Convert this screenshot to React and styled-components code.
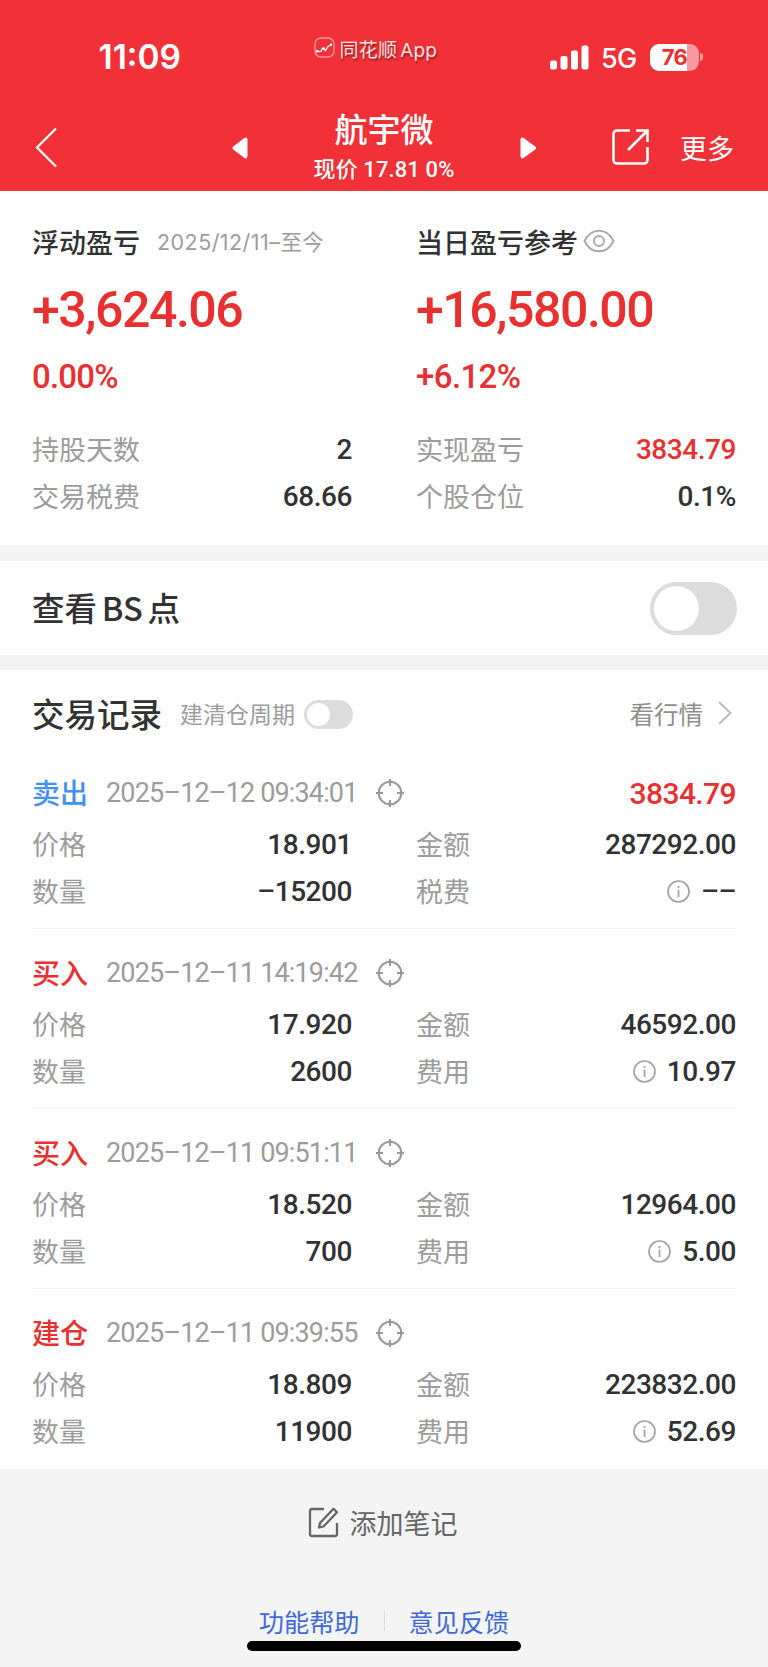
import React from "react";
import styled, { createGlobalStyle } from "styled-components";

const RED = "#e93030";
const INK = "#323232";
const GREY = "#9c9c9c";

const GlobalStyle = createGlobalStyle`
  body {
    margin: 0;
    background: #f4f4f4;
    font-family: "Noto Sans CJK SC", sans-serif;
    color: ${INK};
  }
`;

const Screen = styled.main`
  width: 768px;
  height: 1667px;
  display: flex;
  flex-direction: column;
  overflow: hidden;
  white-space: nowrap;
  svg { display: block; flex: none; }
`;

const Header = styled.header`
  height: 191px;
  background: #f23037;
  color: #fff;
  flex: none;
`;

const StatusBar = styled.div`
  height: 104px;
  display: grid;
  grid-template-columns: 1fr 124px 1fr;
  align-items: start;
  box-sizing: border-box;
  font-family: Inter, "Noto Sans CJK SC", sans-serif;
`;

const Clock = styled.div`
  padding: 37px 0 0 98.5px;
  font-size: 33.5px;
  font-weight: 600;
  line-height: 40px;
`;

const AppTag = styled.div`
  display: flex;
  align-items: center;
  gap: 3.5px;
  margin: 35px -2px 0 -8px;
  height: 26px;
  font-size: 19px;
  word-spacing: -2.5px;
  letter-spacing: 0.2px;
  color: #ffe3e3;
  text-shadow: 1px 2px 2px rgba(90, 0, 0, 0.55);
`;

const Signals = styled.div`
  display: flex;
  align-items: center;
  justify-content: flex-end;
  height: 40px;
  padding: 37px 65px 0 0;
`;

const Network = styled.span`
  font-size: 27px;
  font-weight: 500;
  width: 35px;
  margin: 2px 14px 0 12px;
  letter-spacing: -0.6px;
`;

const Battery = styled.div`
  width: 49px;
  height: 27px;
  border-radius: 9px;
  background: linear-gradient(to right, #fff 37px, #fb999d 37px);
  color: ${RED};
  font-size: 22px;
  font-weight: 700;
  line-height: 27px;
  text-align: center;
  letter-spacing: -0.5px;
`;

const BatteryTip = styled.div`
  width: 3px;
  height: 8px;
  margin-left: 1px;
  border-radius: 0 3px 3px 0;
  background: #fb999d;
`;

const NavBar = styled.nav`
  height: 87px;
  display: grid;
  grid-template-columns: 1fr 304px 1fr;
  align-items: start;
`;

const NavBack = styled.div`
  padding: 22px 0 0 34px;
`;

const StockSwitch = styled.div`
  display: flex;
  justify-content: space-between;
  align-items: flex-start;
  & > svg { margin-top: 32px; }
`;

const StockTitle = styled.div`
  text-align: center;
`;

const StockName = styled.div`
  font-size: 33px;
  font-weight: 500;
  line-height: 40px;
  margin-top: 4px;
`;

const StockPrice = styled.div`
  font-family: Roboto, "Noto Sans CJK SC", sans-serif;
  font-size: 22px;
  font-weight: 500;
  line-height: 30px;
  margin-top: 7px;
  letter-spacing: 0.1px;
`;

const NavActions = styled.div`
  display: flex;
  justify-content: flex-end;
  gap: 31px;
  padding: 25px 34px 0 0;
`;

const NavText = styled.span`
  font-size: 27px;
  line-height: 38px;
`;

const Panel = styled.section`
  background: #fff;
  box-sizing: border-box;
  flex: none;
  height: ${(p) => p.$height}px;
  padding: 0 32px;
  margin-bottom: ${(p) => p.$after || 0}px;
`;

const Columns = styled.div`
  display: grid;
  grid-template-columns: 320px 320px;
  column-gap: 64px;
`;

const SummaryHead = styled.div`
  display: flex;
  align-items: center;
  height: 40px;
  margin-top: 30px;
  font-size: 27px;
  font-weight: 500;
  & > svg { margin-left: 5px; }
`;

const Period = styled.span`
  margin: -2px 0 0 17px;
  font-family: Inter, "Noto Sans CJK SC", sans-serif;
  font-size: 21.5px;
  font-weight: 400;
  color: ${GREY};
  letter-spacing: 0.45px;
`;

const Num = styled.span`
  font-family: Roboto, "Noto Sans CJK SC", sans-serif;
  font-size: ${(p) => p.$size || 28}px;
  font-weight: 500;
  color: ${(p) => p.$color || INK};
  letter-spacing: ${(p) => p.$track ?? -0.45}px;
`;

const BigFigure = styled.div`
  height: 64px;
  margin-top: 17px;
  line-height: 64px;
`;

const Ratio = styled.div`
  height: 40px;
  margin: 15px 0 30px;
  line-height: 40px;
`;

const Field = styled.div`
  display: flex;
  align-items: center;
  justify-content: space-between;
  height: 46.5px;
  line-height: 46px;
`;

const FieldLabel = styled.span`
  margin-top: -2px;
  font-size: 27px;
  color: ${GREY};
`;

const FieldValue = styled.span`
  display: flex;
  align-items: center;
  gap: 11px;
`;

const SwitchRow = styled.div`
  display: flex;
  align-items: center;
  justify-content: space-between;
  height: 100%;
`;

const SectionTitle = styled.h2`
  margin: -2px 0 0;
  font-size: 32.5px;
  font-weight: 500;
  line-height: 44px;
  word-spacing: -2.5px;
`;

const Toggle = styled.div`
  box-sizing: border-box;
  width: ${(p) => (p.$small ? 49 : 87)}px;
  height: ${(p) => (p.$small ? 29 : 53)}px;
  padding: ${(p) => (p.$small ? 3 : 4)}px;
  margin-right: -1px;
  border-radius: 27px;
  background: #dcdcdc;
`;

const Knob = styled.div`
  height: 100%;
  aspect-ratio: 1;
  border-radius: 50%;
  background: #fff;
`;

const RecordsHead = styled.div`
  display: flex;
  align-items: center;
  height: 70px;
  padding-top: 9px;
`;

const CycleLabel = styled.span`
  margin: -2px 9px 0 18px;
  font-size: 23px;
  color: ${GREY};
`;

const QuoteLink = styled.a`
  display: flex;
  align-items: center;
  gap: 14.5px;
  margin: -2px 0 0 auto;
  padding-right: 4.5px;
  font-size: 24.5px;
  color: #8e8e8e;
`;

const Record = styled.article`
  box-sizing: border-box;
  height: 180px;
  padding-top: 20px;
  border-bottom: 1px solid ${(p) => (p.$last ? "transparent" : "#f3f3f3")};
`;

const RecordHead = styled.div`
  display: flex;
  align-items: center;
  height: 48px;
  margin-bottom: 5px;
`;

const Side = styled.span`
  width: 74px;
  margin-top: -2px;
  font-size: 28px;
  font-weight: 500;
  line-height: 48px;
  color: ${(p) => p.$color};
`;

const Stamp = styled.span`
  width: 270px;
  font-family: Roboto, sans-serif;
  font-size: 27px;
  font-weight: 400;
  color: ${GREY};
  letter-spacing: -0.85px;
`;

const Profit = styled.span`
  margin-left: auto;
`;

const Footer = styled.footer`
  display: flex;
  flex-direction: column;
  align-items: center;
  height: 198px;
  background: #f4f4f4;
`;

const AddNote = styled.div`
  display: flex;
  align-items: center;
  gap: 11px;
  height: 40px;
  margin: 33px 0 59px -3px;
  font-size: 27px;
  color: #666;
`;

const Links = styled.div`
  display: flex;
  align-items: center;
  height: 40px;
  font-size: 25.2px;
  color: #4169d8;
`;

const LinkRule = styled.i`
  width: 1px;
  height: 20px;
  margin: 0 23.5px 0 24.5px;
  background: #dcdcdc;
`;

const HomeBar = styled.div`
  width: 274px;
  height: 10px;
  border-radius: 5px;
  background: #000;
`;

const Logo = () => (
  <svg width="22" height="22" viewBox="0 0 22 22" fill="none" stroke="#ff9d9d">
    <rect x="1" y="1" width="19" height="19" rx="6" strokeWidth="1.3" />
    <path d="M3 14.5h4L8.5 11l3 2.5L14 9.5l3-1.8" stroke="#fff" strokeWidth="1.2" />
    <path d="M2 14.3h2.5M9.500 11.500h1.500M16 7.700h2" stroke="#fff" strokeWidth="2.5" />
  </svg>
);

const Bars = () => (
  <svg width="39" height="25" viewBox="0 0 39 25" fill="#fff">
    <rect x="0" y="15.5" width="7" height="9" rx="2" />
    <rect x="10.5" y="11" width="7" height="13.5" rx="2" />
    <rect x="21" y="5.5" width="7" height="19" rx="2" />
    <rect x="31.5" y="0.5" width="7" height="24" rx="2" />
  </svg>
);

const BackIcon = () => (
  <svg width="24" height="42" viewBox="0 0 24 42" fill="none" stroke="#fff" strokeWidth="2.3">
    <path d="M22 2.5 3 21.5 22 40.5" />
  </svg>
);

const Triangle = ({ right }) => (
  <svg width="17" height="24" viewBox="0 0 17 24" fill="#fff" stroke="#fff" strokeWidth="4" strokeLinejoin="round">
    <path d={right ? "M3.5 3.5v17L15 12z" : "M13.500 3.500v17L2.500 12z"} />
  </svg>
);

const ShareIcon = () => (
  <svg width="37" height="37" viewBox="0 0 37 37" fill="none" stroke="#fff" strokeWidth="2.6">
    <path d="M18 1.5H5A3.5 3.5 0 0 0 1.5 5v26A3.5 3.5 0 0 0 5 34.5h27a3.5 3.5 0 0 0 3.5-3.5V18" />
    <path d="M24 1.5h11.5V13M35.5 1.5 16 21" />
  </svg>
);

const EyeIcon = () => (
  <svg width="32" height="24" viewBox="0 0 32 24" fill="none" stroke="#aaa" strokeWidth="2">
    <path d="M1.5 12C8-1.8 24-1.8 30.5 12 24 25.8 8 25.8 1.5 12z" />
    <circle cx="16" cy="12" r="5" />
  </svg>
);

const TargetIcon = () => (
  <svg width="28" height="28" viewBox="0 0 28 28" fill="none" stroke="#999" strokeWidth="2">
    <circle cx="14" cy="14" r="11.3" />
    <path d="M14 0v7M14 21v7M0 14h7M21 14h7" />
  </svg>
);

const InfoIcon = () => (
  <svg width="23" height="23" viewBox="0 0 23 23" fill="none" stroke="#a2a2a2" strokeWidth="1.7">
    <circle cx="11.5" cy="11.5" r="10.5" />
    <path d="M11.5 9.500v7.500M11.500 6v2" />
  </svg>
);

const Chevron = () => (
  <svg width="14" height="24" viewBox="0 0 14 24" fill="none" stroke="#bbb" strokeWidth="2">
    <path d="M1 1 12.5 12 1 23" />
  </svg>
);

const EditIcon = () => (
  <svg width="31" height="31" viewBox="0 0 31 31" fill="none" stroke="#666" strokeWidth="2.3">
    <path d="M16 2H4a2 2 0 0 0-2 2v23a2 2 0 0 0 2 2h23a2 2 0 0 0 2-2V16" />
    <path d="M25.5 1.800 29 5.300 15.500 19.500 11 20.500 12 16z" strokeLinejoin="round" />
  </svg>
);

const InfoField = ({ label, value, info, color }) => (
  <Field>
    <FieldLabel>{label}</FieldLabel>
    <FieldValue>
      {info && <InfoIcon />}
      <Num $color={color}>{value}</Num>
    </FieldValue>
  </Field>
);

const records = [
  { side: "卖出", color: "#4290f0", time: "2025–12–12 09:34:01", profit: "3834.79", price: "18.901", amount: "287292.00", count: "–15200", feeName: "税费", fee: "––" },
  { side: "买入", color: RED, time: "2025–12–11 14:19:42", price: "17.920", amount: "46592.00", count: "2600", feeName: "费用", fee: "10.97" },
  { side: "买入", color: RED, time: "2025–12–11 09:51:11", price: "18.520", amount: "12964.00", count: "700", feeName: "费用", fee: "5.00" },
  { side: "建仓", color: RED, time: "2025–12–11 09:39:55", price: "18.809", amount: "223832.00", count: "11900", feeName: "费用", fee: "52.69" },
];

export default function App() {
  return (
    <Screen>
      <GlobalStyle />
      <Header>
        <StatusBar>
          <Clock>11:09</Clock>
          <AppTag><Logo />同花顺 App</AppTag>
          <Signals>
            <Bars />
            <Network>5G</Network>
            <Battery>76</Battery>
            <BatteryTip />
          </Signals>
        </StatusBar>
        <NavBar>
          <NavBack><BackIcon /></NavBack>
          <StockSwitch>
            <Triangle />
            <StockTitle>
              <StockName>航宇微</StockName>
              <StockPrice>现价 17.81 0%</StockPrice>
            </StockTitle>
            <Triangle right />
          </StockSwitch>
          <NavActions>
            <ShareIcon />
            <NavText>更多</NavText>
          </NavActions>
        </NavBar>
      </Header>

      <Panel $height={354} $after={16}>
        <Columns>
          <div>
            <SummaryHead>浮动盈亏<Period>2025/12/11–至今</Period></SummaryHead>
            <BigFigure><Num $size={50} $color={RED} $track={-1.45}>+3,624.06</Num></BigFigure>
            <Ratio><Num $size={33} $color={RED} $track={-0.8}>0.00%</Num></Ratio>
            <InfoField label="持股天数" value="2" />
            <InfoField label="交易税费" value="68.66" />
          </div>
          <div>
            <SummaryHead>当日盈亏参考<EyeIcon /></SummaryHead>
            <BigFigure><Num $size={50} $color={RED} $track={-1.45}>+16,580.00</Num></BigFigure>
            <Ratio><Num $size={33} $color={RED} $track={-0.6}>+6.12%</Num></Ratio>
            <InfoField label="实现盈亏" value="3834.79" color={RED} />
            <InfoField label="个股仓位" value="0.1%" />
          </div>
        </Columns>
      </Panel>

      <Panel $height={94} $after={15}>
        <SwitchRow>
          <SectionTitle>查看 BS 点</SectionTitle>
          <Toggle><Knob /></Toggle>
        </SwitchRow>
      </Panel>

      <Panel $height={799}>
        <RecordsHead>
          <SectionTitle>交易记录</SectionTitle>
          <CycleLabel>建清仓周期</CycleLabel>
          <Toggle $small><Knob /></Toggle>
          <QuoteLink>看行情<Chevron /></QuoteLink>
        </RecordsHead>
        {records.map((r, i) => (
          <Record key={r.time} $last={i === records.length - 1}>
            <RecordHead>
              <Side $color={r.color}>{r.side}</Side>
              <Stamp>{r.time}</Stamp>
              <TargetIcon />
              {r.profit && <Profit><Num $size={30} $color={RED} $track={-0.6}>{r.profit}</Num></Profit>}
            </RecordHead>
            <Columns>
              <InfoField label="价格" value={r.price} />
              <InfoField label="金额" value={r.amount} />
              <InfoField label="数量" value={r.count} />
              <InfoField label={r.feeName} value={r.fee} info />
            </Columns>
          </Record>
        ))}
      </Panel>

      <Footer>
        <AddNote><EditIcon />添加笔记</AddNote>
        <Links>功能帮助<LinkRule />意见反馈</Links>
        <HomeBar />
      </Footer>
    </Screen>
  );
}
